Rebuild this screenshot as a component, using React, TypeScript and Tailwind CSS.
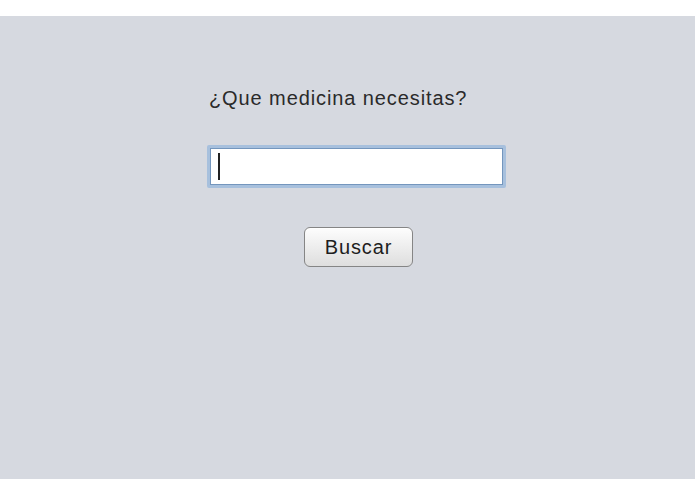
export default function App() {
  return (
    <div className="w-[695px] h-[494px] bg-white font-['Liberation_Sans',Arial,sans-serif]">
      <div className="h-[16px]" />
      <div className="h-[463px] bg-[#d6d9e0] pt-[71px] pl-[207px]">
        <div className="w-[299px] flex flex-col">
          <p className="pl-[2px] text-[20px] leading-[23px] tracking-[0.9px] text-[#2a2a2a]">
            ¿Que medicina necesitas?
          </p>
          <div className="mt-[35px] h-[43px] rounded-[2px] border-[3px] border-[#a7c0dd] bg-white shadow-[inset_0_0_0_1px_#7496bd] flex items-center pl-[8px]">
            <span className="w-[2px] h-[27px] bg-[#222]" />
          </div>
          <div className="mt-[39px] flex justify-center pl-[4px]">
            <button className="w-[109px] h-[40px] rounded-[6px] border border-[#858585] bg-gradient-to-b from-[#fdfdfd] to-[#dedede] text-[20px] tracking-[0.9px] text-[#1e1e1e] shadow-[inset_0_1px_0_#ffffff]">
              Buscar
            </button>
          </div>
        </div>
      </div>
    </div>
  );
}
